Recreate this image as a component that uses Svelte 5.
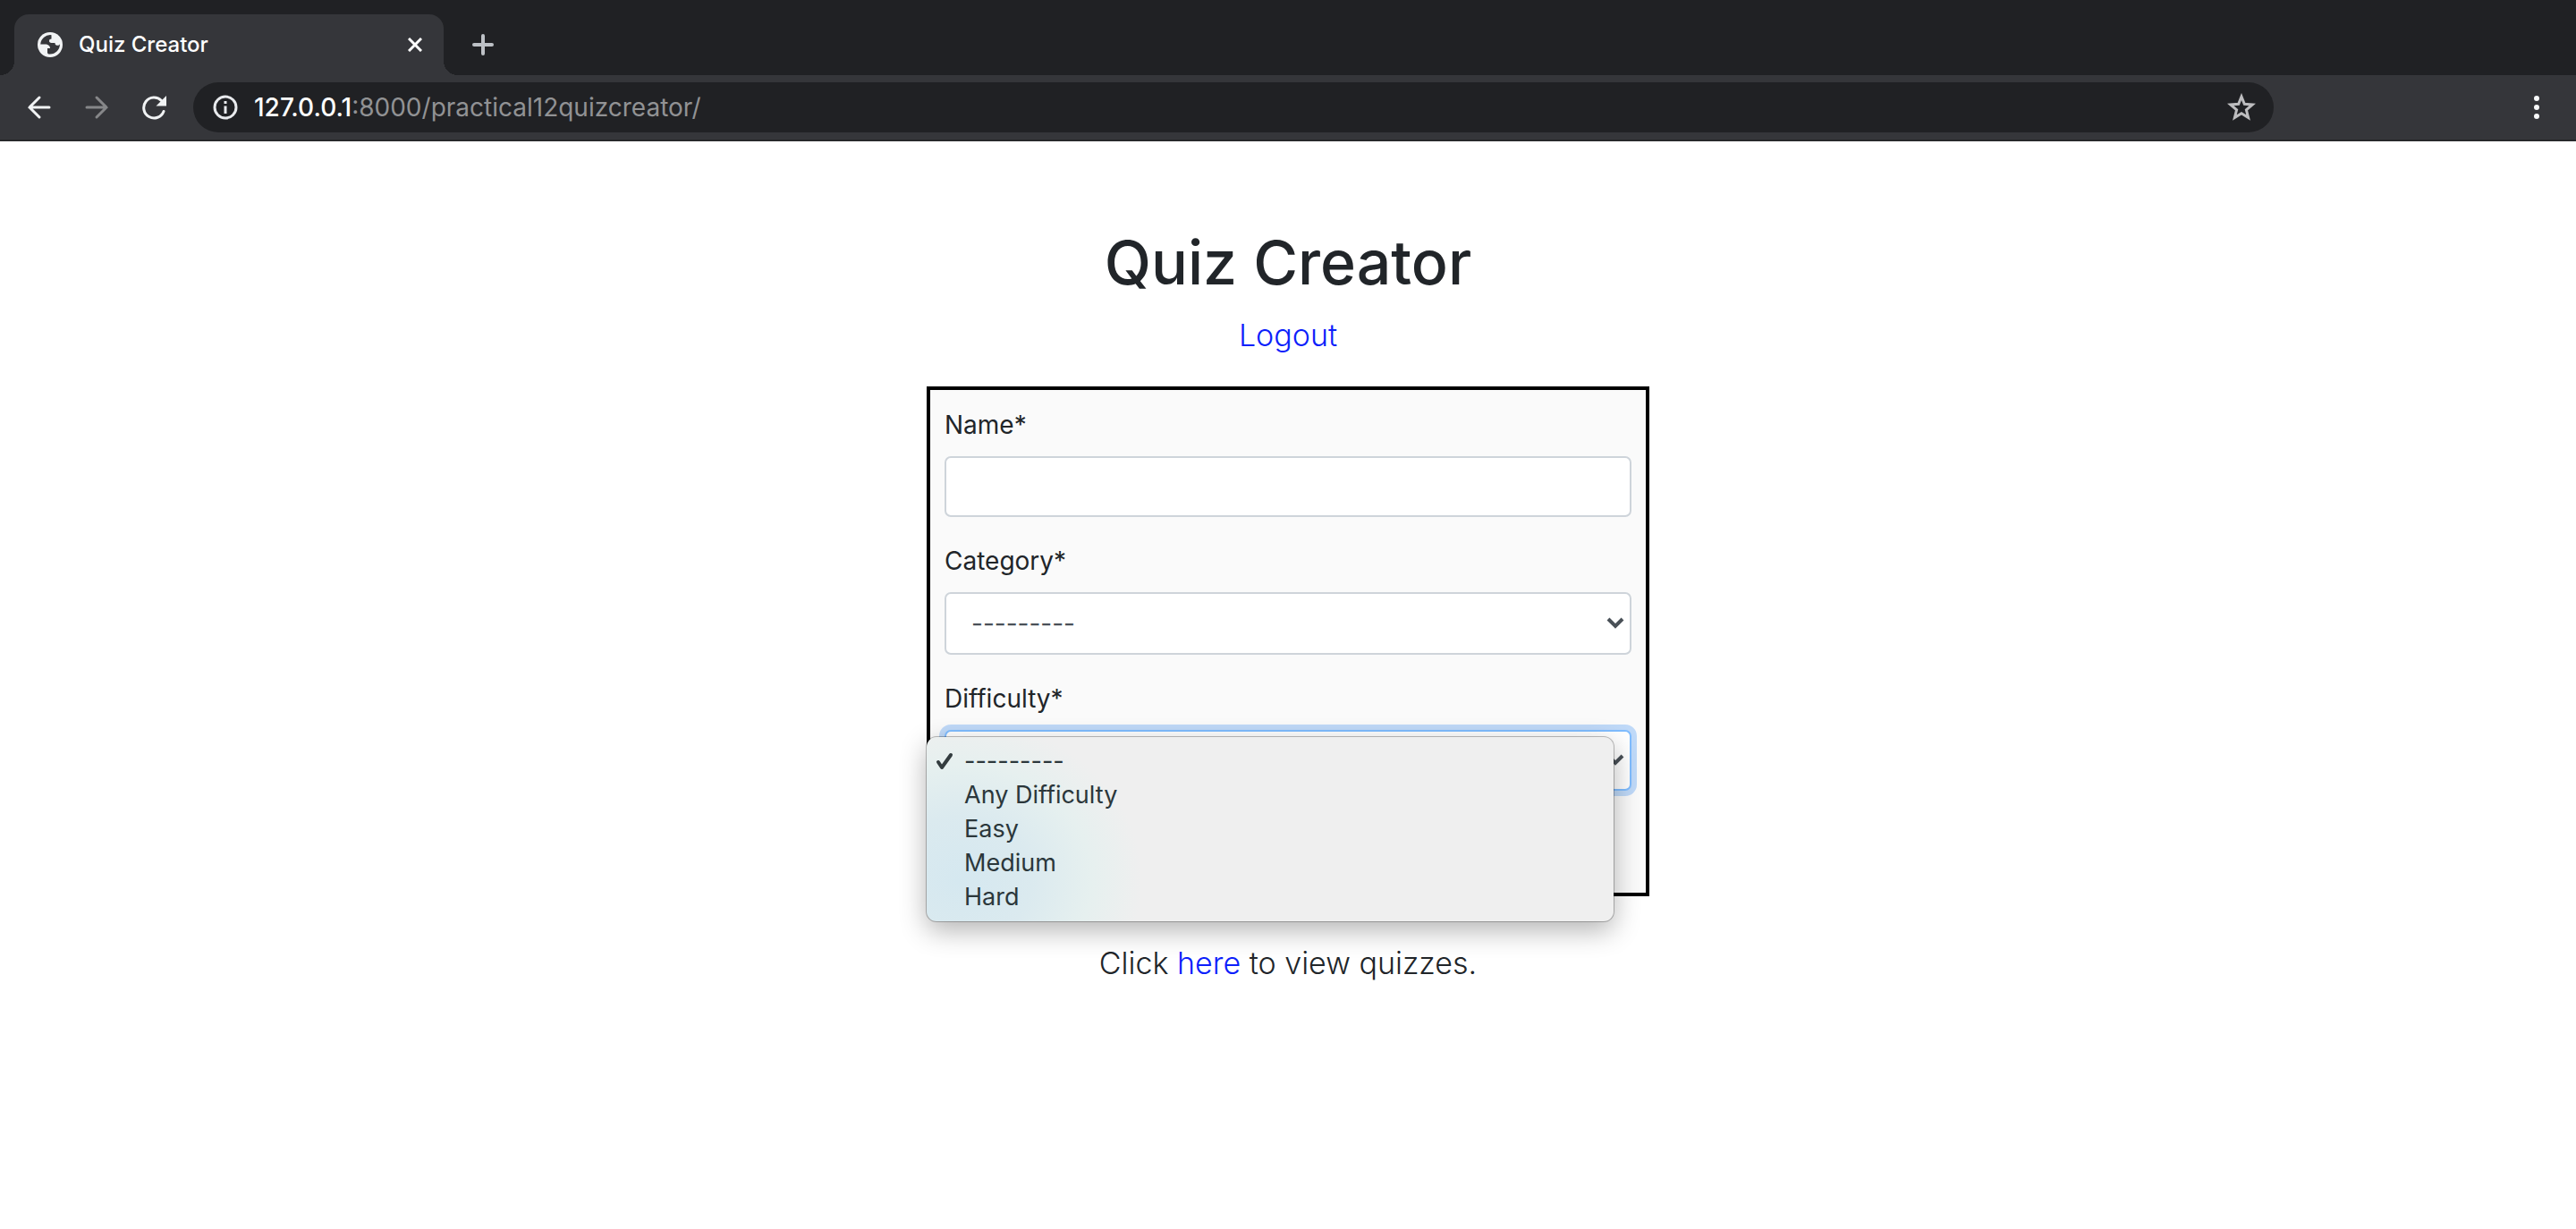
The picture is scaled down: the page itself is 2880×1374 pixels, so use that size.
<script>
  const difficulties = ['---------', 'Any Difficulty', 'Easy', 'Medium', 'Hard'];
  let name = $state('');
  let category = $state('');
  let difficulty = $state('---------');
</script>

<div class="browser">
  <header>
    <div class="tabstrip">
      <div class="tab">
        <svg class="globe" viewBox="0 0 28 28" aria-hidden="true">
          <circle cx="14" cy="14" r="14" fill="#f1f3f4" />
          <path d="M15.500 3.200A11 11 0 0 0 3.200 13.500H8.500c3.200 0 5.500 1.600 5.500 4.500h-3v4.500c0 1 .6 1.700 1.600 2C19.500 25.200 25 20 25 13.300c-1 1.500-2.600 1.900-4.200 1.200-1-.5-1.300-1.300-1.300-2.500h-4c-1.600 0-2.500-.9-2.500-2.200 0-1.400 1-2.300 2.500-2.300z" fill="#35363a" />
        </svg>
        <span class="tab-title">Quiz Creator</span>
        <button class="icon" aria-label="Close tab"><svg width="16" height="16" viewBox="0 0 16 16"><path d="M1 1l14 14M15 1L1 15" stroke="#fff" stroke-width="3" /></svg></button>
      </div>
      <button class="icon" aria-label="New tab"><svg width="24" height="24" viewBox="0 0 24 24"><path d="M12 2v20M2 12h20" stroke="#bdc1c6" stroke-width="4" stroke-linecap="round" /></svg></button>
    </div>
    <div class="toolbar">
      <nav>
        <button class="icon" aria-label="Back"><svg width="28" height="28" viewBox="0 0 28 28" fill="none" stroke="#f1f3f4" stroke-width="3" stroke-linecap="round"><path d="M25 14H3M14 3L3 14l11 11" /></svg></button>
        <button class="icon" aria-label="Forward"><svg width="28" height="28" viewBox="0 0 28 28" fill="none" stroke="#868789" stroke-width="3" stroke-linecap="round"><path d="M3 14h22M14 3l11 11-11 11" /></svg></button>
        <button class="icon" aria-label="Reload"><svg width="28" height="28" viewBox="0 0 28 28"><path d="M25 18.500a11.500 11.500 0 1 1-2.500-12" fill="none" stroke="#f1f3f4" stroke-width="3" stroke-linecap="round" /><path d="M28 1v11.500H16.500z" fill="#f1f3f4" /></svg></button>
      </nav>
      <div class="omnibox">
        <svg width="28" height="28" viewBox="0 0 28 28" aria-hidden="true"><circle cx="14" cy="14" r="12" fill="none" stroke="#e8eaed" stroke-width="3" /><path d="M14 12.500V21M14 7v3" stroke="#e8eaed" stroke-width="3" /></svg>
        <span class="url"><b>127.0.0.1</b>:8000/practical12quizcreator/</span>
        <button class="icon" aria-label="Bookmark this tab"><svg width="32" height="32" viewBox="0 0 32 32"><path d="M16 4l3.300 8.300 9 .7-6.900 5.800 2.200 8.700L16 22.800l-7.600 4.700 2.200-8.700L3.700 13l9-.7z" fill="none" stroke="#bdbdbf" stroke-width="3" /></svg></button>
      </div>
      <button class="icon" aria-label="Menu"><svg width="28" height="28" viewBox="0 0 28 28" fill="#f8f9fa"><circle cx="14" cy="4" r="3" /><circle cx="14" cy="14" r="3" /><circle cx="14" cy="24" r="3" /></svg></button>
    </div>
  </header>

  <main>
    <h1>Quiz Creator</h1>
    <p class="lead"><a href="#logout">Logout</a></p>
    <form>
      <label for="name">Name*</label>
      <input id="name" type="text" bind:value={name} />
      <label for="category">Category*</label>
      <div class="field">
        <select id="category" bind:value={category}><option value="">---------</option></select>
        <svg class="chevron" width="20" height="14" viewBox="0 0 20 14" aria-hidden="true"><path d="M2 2l8 8 8-8" /></svg>
      </div>
      <label for="difficulty">Difficulty*</label>
      <div class="field">
        <select id="difficulty" class="focused" bind:value={difficulty}>
          {#each difficulties as d}<option value={d}>{d}</option>{/each}
        </select>
        <svg class="chevron" width="20" height="14" viewBox="0 0 20 14" aria-hidden="true"><path d="M2 2l8 8 8-8" /></svg>
        <div class="menu" role="listbox" aria-label="Difficulty">
          {#each difficulties as d}
            <button type="button" role="option" aria-selected={d === difficulty} onclick={() => (difficulty = d)}>
              <span class="tick">{#if d === difficulty}<svg width="20" height="20" viewBox="0 0 20 20"><path d="M3 11l4 6L17 3" /></svg>{/if}</span>
              {d}
            </button>
          {/each}
        </div>
      </div>
    </form>
    <p class="lead view">Click <a href="#quizzes">here</a> to view quizzes.</p>
  </main>
</div>

<style>
  :global(body) { margin: 0; background: #fff; }
  .browser { font-family: Inter, 'Liberation Sans', sans-serif; color: #212529; }
  .browser * { box-sizing: border-box; }
  button { font: inherit; color: inherit; background: none; border: 0; padding: 0; margin: 0; }
  svg { display: block; flex: none; }
  .icon { display: flex; flex: none; }
  .tabstrip { display: flex; align-items: center; gap: 32px; height: 84px; padding: 16px 16px 0; background: #202124; }
  .tab { position: relative; display: flex; align-items: center; gap: 18px; width: 480px; height: 68px; padding: 0 24px 0 26px; border-radius: 16px 16px 0 0; background: #35363a; color: #fff; }
  .tab::before, .tab::after { content: ''; position: absolute; bottom: 0; width: 16px; height: 16px; }
  .tab::before { right: 100%; background: radial-gradient(circle at 0 0, #202124 16px, #35363a 16px); }
  .tab::after { left: 100%; background: radial-gradient(circle at 100% 0, #202124 16px, #35363a 16px); }
  .globe { width: 28px; height: 28px; }
  .tab-title { flex: 1; font-size: 24px; line-height: 32px; font-weight: 500; }
  .toolbar { display: flex; align-items: center; height: 74px; padding: 6px 30px 6px; background: #35363a; border-bottom: 2px solid #27282b; }
  nav { display: flex; gap: 36px; margin-right: 30px; }
  .omnibox { display: flex; flex: 1; align-items: center; gap: 18px; height: 56px; margin-right: 280px; padding: 0 20px 0 22px; border-radius: 28px; background: #202124; }
  .url { flex: 1; font-size: 28px; line-height: 36px; color: #919294; }
  .url b { font-weight: 500; color: #fff; }

  main { display: flex; flex-direction: column; align-items: center; padding: 92px 24px; }
  h1 { margin: 0; font-size: 68px; line-height: 86px; font-weight: 500; }
  .lead { margin: 12px 0 0; font-size: 34px; line-height: 54px; font-weight: 300; }
  .view { margin-top: 48px; }
  a { color: #0d1ffb; text-decoration: none; }
  form { width: 100%; max-width: 808px; margin-top: 30px; padding: 17px 16px 114px; border: 4px solid #000; background: #fafafa; }
  label { display: block; margin-bottom: 13px; font-size: 28px; line-height: 44px; }
  input, select { display: block; width: 100%; height: 70px; margin: 0; padding: 0 28px; border: 2px solid #ced4da; border-radius: 7px; background: #fff; color: #495057; font: 400 28px/42px Inter, 'Liberation Sans', sans-serif; appearance: none; outline: 0; }
  input { height: 68px; margin-bottom: 27px; }
  .field { position: relative; display: grid; align-items: center; margin-bottom: 27px; }
  .field > select, .chevron { grid-area: 1 / 1; }
  .focused { height: 68px; border-color: #80bdff; box-shadow: 0 0 0 6px #bfd9f8; }
  .chevron { justify-self: end; margin-right: 8px; fill: none; stroke: #495057; stroke-width: 4; pointer-events: none; z-index: 1; }
  .field:last-child { margin-bottom: 0; }
  .menu { position: absolute; z-index: 2; top: 8px; left: -20px; right: 20px; padding: 8px 0; border-radius: 11px; background: radial-gradient(ellipse 205px 180px at 36px 160px, #d5e8f0 0, #dbeaef 40%, #e6f0ef 72%, #efefef 100%) #efefef; box-shadow: 0 0 0 1px rgba(0, 0, 0, 0.25), 0 10px 30px rgba(0, 0, 0, 0.3); color: #2b373b; }
  .menu button { display: flex; align-items: center; gap: 12px; width: 100%; padding-left: 10px; font-size: 27px; line-height: 38px; text-align: left; }
  .tick { width: 20px; }
  .tick path { fill: none; stroke: #333c3f; stroke-width: 4; stroke-linecap: round; stroke-linejoin: round; }
</style>
